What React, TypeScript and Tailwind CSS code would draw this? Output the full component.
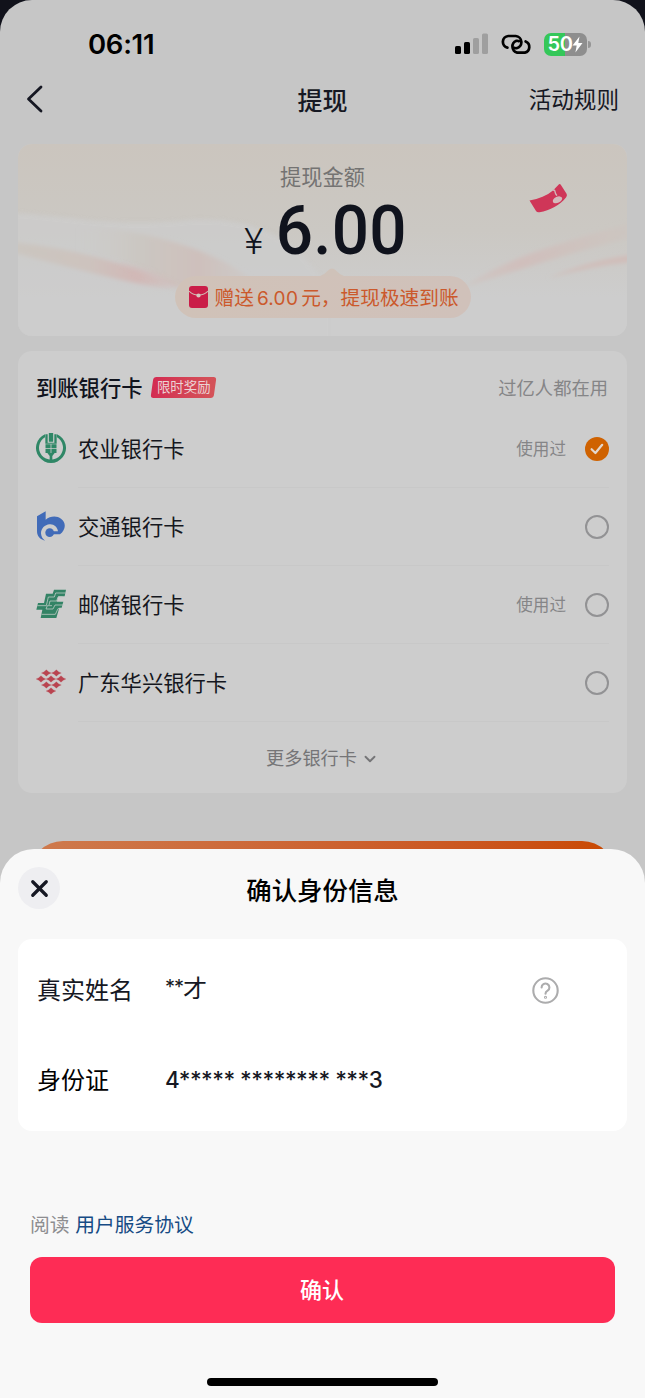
import type { ReactNode } from 'react';
import { ChevronDown, X } from 'lucide-react';

function StatusBar() {
  return (
    <div className="flex h-[66px] items-end justify-between pl-[88px] pr-[54px] pb-2">
      <span className="h-7 text-[27.5px] leading-7 font-[560] tracking-[-0.3px] text-black">06:11</span>
      <div className="flex h-7 items-center">
        <svg className="mr-3 h-[22px] w-[34px]" viewBox="0 0 34 22">
          <rect x="0" y="13" width="6" height="8" rx="1.6" fill="#000" />
          <rect x="9" y="9" width="6" height="12" rx="1.6" fill="#000" />
          <rect x="18" y="5" width="6" height="16" rx="1.6" fill="#9f9f9f" />
          <rect x="27" y="0.5" width="6" height="20.5" rx="1.6" fill="#9f9f9f" />
        </svg>
        <svg className="mr-3 h-5 w-[31px]" viewBox="0 0 31 20" fill="none" stroke="#000" strokeWidth="2.7" strokeLinecap="round">
          <path d="M6.4 13.6A5.9 5.9 0 0 1 7.2 2h7.6a6.2 6.2 0 0 1 .8 12.2 4 4 0 0 1-2.6-.4" />
          <path d="M24.6 7.4a5.9 5.9 0 0 1-.8 11.2h-7.6a6.2 6.2 0 0 1-.8-11.8 4 4 0 0 1 2.6.4" />
        </svg>
        <div className="flex h-[23px] w-[43px] items-center justify-center rounded-[7px] bg-gradient-to-r from-[#34c759] from-50% to-[#8e8e8e] to-50% text-white">
          <span className="text-[20px] leading-none font-semibold tracking-[-0.5px]">50</span>
          <svg className="h-[17px] w-[11px]" viewBox="0 0 11 17" fill="#fff">
            <path d="M7.5 0.5 0.5 9.6h4.2L3.4 16.4 10.5 7H6.3z" />
          </svg>
        </div>
        <div className="ml-px h-[7px] w-[3px] rounded-r-full bg-[#959595]" />
      </div>
    </div>
  );
}

function AmountCard() {
  return (
    <section className="relative mx-[18px] h-48 overflow-hidden rounded-[14px] bg-[#cdcdcd]">
      <svg className="absolute inset-0 h-full w-full" viewBox="0 0 609 192" preserveAspectRatio="none">
        <defs>
          <linearGradient id="top" x1="0" y1="0" x2="0" y2="1">
            <stop offset="0" stopColor="#cbc5be" />
            <stop offset="0.45" stopColor="#cbc8c3" />
            <stop offset="0.8" stopColor="#cdcdcd" />
          </linearGradient>
          <linearGradient id="left" x1="0" y1="0" x2="1" y2="0">
            <stop offset="0" stopColor="#cbc6c0" />
            <stop offset="0.45" stopColor="#cdc3be" />
            <stop offset="0.75" stopColor="#d1b8b6" />
            <stop offset="1" stopColor="#cec9c7" />
          </linearGradient>
          <linearGradient id="mid" x1="0" y1="0" x2="1" y2="0">
            <stop offset="0" stopColor="#cdcbc8" stopOpacity="0" />
            <stop offset="0.35" stopColor="#cbc7c2" />
            <stop offset="0.7" stopColor="#cec0bc" />
            <stop offset="1" stopColor="#cdcac8" />
          </linearGradient>
          <linearGradient id="right" x1="0" y1="0" x2="1" y2="0">
            <stop offset="0" stopColor="#cec8c5" />
            <stop offset="0.35" stopColor="#d0bfbc" />
            <stop offset="1" stopColor="#ccc6c1" />
          </linearGradient>
          <filter id="soft" x="-10%" y="-30%" width="120%" height="160%">
            <feGaussianBlur stdDeviation="2" />
          </filter>
        </defs>
        <rect width="609" height="192" fill="url(#top)" />
        <path d="M-5 69C50 71 90 84 170 76C240 72 280 95 310 145V200H-5z" fill="#cdcdcd" opacity="0.75" filter="url(#soft)" />
        <path d="M60 84C110 82 190 102 232 134C205 150 175 146 155 142C130 124 105 116 60 108z" fill="url(#mid)" filter="url(#soft)" />
        <path d="M-4 98C50 104 115 119 160 145C115 142 50 122-4 109z" fill="url(#left)" filter="url(#soft)" />
        <path d="M100 119Q135 123 164 144Q130 138 100 119z" fill="#d1b8b5" opacity="0.5" filter="url(#soft)" />
        <path d="M444 144C480 119 520 105 612 79V94C560 106 500 126 444 144z" fill="url(#right)" filter="url(#soft)" />
        <path d="M530 134Q574 116 612 111V118Q574 122 530 134z" fill="#d0bdb9" filter="url(#soft)" />
      </svg>
      {/* floating coupon */}
      <svg className="absolute top-[39px] left-[511px] h-[31px] w-[39px]" viewBox="0 0 39 31">
        <path d="M.5 17.5C10 15.8 18 12.5 24 7.5L30 1.2Q31 .6 31.8 1.8L37.7 11Q38.4 12.5 37 14.5C31 22 21 27.5 10.5 29.2Q8 29.6 7 28z" fill="#cf3658" />
        <path d="M23.8 7.4q2-1 2.1.9.2 2 2 4.4" fill="none" stroke="#d4b9bb" strokeWidth="1.4" />
        <ellipse cx="28.5" cy="16.8" rx="5" ry="3" transform="rotate(-25 28.5 16.8)" fill="#d4b9bb" />
      </svg>

      <div className="relative flex flex-col items-center">
        <p className="mt-[18px] text-[21.2px] leading-[30px] text-[#747372]">提现金额</p>
        <div className="mt-[5px] flex h-[69px] items-baseline pl-[6px] font-['Roboto','Noto_Sans_CJK_SC',sans-serif] text-[#10131d]">
          <span className="mr-2 text-[37px] leading-[68px] font-light">¥</span>
          <span className="origin-right scale-x-[0.965] text-[68px] leading-[68px] font-medium tracking-[0.2px]">6.00</span>
        </div>
        <div className="relative mt-[10px] flex h-[42px] w-[296px] items-center rounded-full bg-gradient-to-r from-[#d0c2b8] to-[#d0c1ba] pl-[14px] text-[19.7px] whitespace-nowrap text-[#cb592c]">
          <svg className="absolute -top-2 left-[145px] h-2 w-6" viewBox="0 0 24 8">
            <path d="M0 8Q4 7 8 2.5Q12-1.5 16 2.5Q20 7 24 8z" fill="#cfc2b9" />
          </svg>
          <svg className="mr-[7px] h-[22px] w-[19px] shrink-0" viewBox="0 0 19 22">
            <rect width="19" height="22" rx="3" fill="#ca1d48" />
            <path d="M0 5Q3 8.8 9.5 9Q16 8.8 19 5" fill="none" stroke="#d0bdb6" strokeWidth="1.1" />
            <circle cx="9.5" cy="9.5" r="2.1" fill="#d8c5bf" />
          </svg>
          <span className="pt-[3px]">
            赠送<span className="mx-[3px] text-[19px] tracking-[0.3px]">6.00</span>元，提现极速到账
          </span>
        </div>
      </div>
    </section>
  );
}

function AbcLogo() {
  return (
    <svg className="h-[30px] w-[30px]" viewBox="0 0 90 90" fill="#2f8766">
      <path d="M27 3.5A45 45 0 1 0 63 3.5V13A36 36 0 1 1 27 13z" />
      <path d="M38.5 0h13v26h-13zM28 4h7v25h20V4h7v28H28zM28.5 33.5h15.3v11.5H28.5zM46.2 33.5h15.3v11.5H46.2zM28.5 47.5h15.3v12.5H28.5zM46.2 47.5h15.3v12.5H46.2zM34 60h22l-7 9v18h-8V69z" />
    </svg>
  );
}

function BocomLogo() {
  return (
    <svg className="h-[30px] w-[30px]" viewBox="0 0 90 90" fill="#416bb8">
      <path d="M3 16 29 1V26C42 15 62 13 75 23C92 36 89 56 72 70H50V61H66C64 48 54 39 41 40C26 41 15 53 15 67C16 77 19 83 27 89C12 85 3 76 3 60z" />
      <circle cx="41" cy="65" r="13" />
    </svg>
  );
}

function PsbcLogo() {
  return (
    <svg className="h-[30px] w-[30px]" viewBox="0 0 90 90">
      <path d="M54 2H90L86 22H67L62 38H82L77 56H70L61 87H14L19 62H1L6 42H24L30 14H50z" fill="#338365" />
      <path
        d="M89 12H59L55 24H37L31 50H4M83 48H57L51 60H30L34 50H48M77 59H66L58 76H17M80 24H66L62 36H42L39 48"
        fill="none"
        stroke="#bfcbc5"
        strokeWidth="2.4"
      />
    </svg>
  );
}

const STARS = [[31, 18], [61, 18], [15, 36], [45, 36], [75, 36], [31, 54], [61, 54], [45, 72]];

function HuaxingLogo() {
  return (
    <svg className="h-[30px] w-[30px]" viewBox="0 0 90 90" fill="#b94450">
      {STARS.map(([x, y]) => (
        <path
          key={`${x}-${y}`}
          transform={`translate(${x} ${y})`}
          d="M-15 0Q-6-3 0-10Q6-3 15 0Q6 3 0 10Q-6 3-15 0z"
          stroke="#b94450"
          strokeWidth="0.5"
        />
      ))}
    </svg>
  );
}

interface Bank {
  name: string;
  logo: ReactNode;
  used?: boolean;
  selected?: boolean;
}

const BANKS: Bank[] = [
  { name: '农业银行卡', logo: <AbcLogo />, used: true, selected: true },
  { name: '交通银行卡', logo: <BocomLogo /> },
  { name: '邮储银行卡', logo: <PsbcLogo />, used: true },
  { name: '广东华兴银行卡', logo: <HuaxingLogo /> },
];

function BankRow({ bank }: { bank: Bank }) {
  return (
    <li className="flex h-[78px] items-center">
      <div className="mr-3 w-[30px] pb-[2px]">{bank.logo}</div>
      <div className="flex h-full flex-1 items-center border-b border-[#c8c8c8]">
        <span className="flex-1 pt-[2px] text-[21.3px] text-[#151720]">{bank.name}</span>
        {bank.used && <span className="mr-[19px] pt-[2px] text-[16.6px] text-[#858587]">使用过</span>}
        {bank.selected ? (
          <span className="flex h-6 w-6 items-center justify-center rounded-full bg-[#cf6201]">
            <svg className="h-3 w-[14px]" viewBox="0 0 14 12" fill="none" stroke="#e4d8cd" strokeWidth="2.2" strokeLinecap="round" strokeLinejoin="round">
              <path d="M1.6 6.2 5.4 10 12.2 1.8" />
            </svg>
          </span>
        ) : (
          <span className="h-6 w-6 rounded-full border-[2.5px] border-[#929294]" />
        )}
      </div>
    </li>
  );
}

function BankCard() {
  return (
    <section className="mx-[18px] mt-[15px] h-[442px] rounded-[14px] bg-[#cdcdcd] px-[18px]">
      <div className="flex h-[59px] items-center pt-[14px]">
        <h2 className="pt-[2px] text-[21.3px] font-medium text-[#10131d]">到账银行卡</h2>
        <div className="ml-[9px] flex h-[21px] w-[63px] -skew-x-[8deg] items-center justify-center rounded-[3px] bg-gradient-to-r from-[#d32b51] to-[#d45359]">
          <span className="skew-x-[8deg] text-[13.4px] leading-none text-[#ecd3d5]">限时奖励</span>
        </div>
        <span className="ml-auto pt-[2px] pr-[1px] text-[18.3px] text-[#858587]">过亿人都在用</span>
      </div>
      <ul>
        {BANKS.map((bank) => (
          <BankRow key={bank.name} bank={bank} />
        ))}
      </ul>
      <div className="flex h-[71px] items-center justify-center pt-[3px] text-[18.2px] text-[#757577]">
        更多银行卡
        <ChevronDown className="ml-1 h-[18px] w-[18px]" strokeWidth={2.5} />
      </div>
    </section>
  );
}

function IdentitySheet() {
  return (
    <div className="absolute inset-x-0 bottom-0 flex h-[549px] flex-col rounded-t-[34px] bg-[#f8f8f8]">
      <div className="flex h-[90px] items-center px-[18px] pb-3">
        <button className="flex h-[42px] w-[42px] items-center justify-center rounded-full bg-[#eeeef1]">
          <X className="h-[27px] w-[27px] text-[#161823]" strokeWidth={2.9} />
        </button>
        <h2 className="flex-1 pt-[6px] pr-[42px] text-center text-[25.4px] font-medium text-black">确认身份信息</h2>
      </div>

      <div className="mx-[18px] h-48 rounded-[14px] bg-white px-[19px] text-[24px] text-[#161823]">
        <div className="flex h-[102px] items-center">
          <span className="w-[129px] pt-[2px]">真实姓名</span>
          <span className="-ml-px flex flex-1 items-center pb-[2px]">
            <span className="pb-[5px] text-[20px] tracking-[-1px]">**</span>才
          </span>
          <svg className="mr-[49px] h-[27px] w-[27px]" viewBox="0 0 27 27" fill="none" stroke="#acacad" strokeWidth="2.1" strokeLinecap="round">
            <circle cx="13.5" cy="13.5" r="12.2" />
            <path d="M9.6 10.5a3.9 3.9 0 1 1 6 3.2c-1.5 1-2.1 1.5-2.1 3.1" />
            <circle cx="13.5" cy="20.2" r=".5" />
          </svg>
        </div>
        <div className="flex h-[78px] items-center">
          <span className="w-[129px] pt-[2px] text-black">身份证</span>
          <span className="-ml-px text-[22.5px] font-medium tracking-[-0.52px] whitespace-nowrap">4***** ******** ***3</span>
        </div>
      </div>

      <p className="mt-[79px] ml-[30px] text-[19.8px] leading-[30px] text-[#8d8d90]">
        阅读 <a className="text-[#164b84]">用户服务协议</a>
      </p>
      <button className="mx-[30px] mt-[17px] h-[66px] rounded-xl bg-[#fe2c55] pr-[1px] text-[22px] font-medium text-white">
        确认
      </button>
      <div className="mx-auto mt-auto mb-3 h-2 w-[231px] rounded-full bg-black" />
    </div>
  );
}

export default function App() {
  return (
    <div className="h-[1398px] w-full bg-[#11121b] font-['Inter','Noto_Sans_CJK_SC',sans-serif]" lang="zh-CN">
      <div className="relative h-full overflow-hidden rounded-t-[32px] bg-[#c6c6c6]">
        <StatusBar />
        <header className="flex h-[66px] items-center px-[26px]">
          <div className="flex-1">
            <svg className="h-[30px] w-[18px]" viewBox="0 0 18 30" fill="none" stroke="#161823" strokeWidth="2.8" strokeLinecap="round" strokeLinejoin="round">
              <path d="M15 3 2.5 15 15 27" />
            </svg>
          </div>
          <h1 className="pt-[5px] text-[25px] font-medium text-[#161823]">提现</h1>
          <span className="flex-1 pt-[2px] text-right text-[22.6px] text-[#161823]">活动规则</span>
        </header>
        <div className="h-3" />
        <AmountCard />
        <BankCard />
        <div className="mx-[30px] mt-12 h-[66px] rounded-[33px] bg-gradient-to-r from-[#ce7a4d] to-[#c94900]" />
        <IdentitySheet />
      </div>
    </div>
  );
}
